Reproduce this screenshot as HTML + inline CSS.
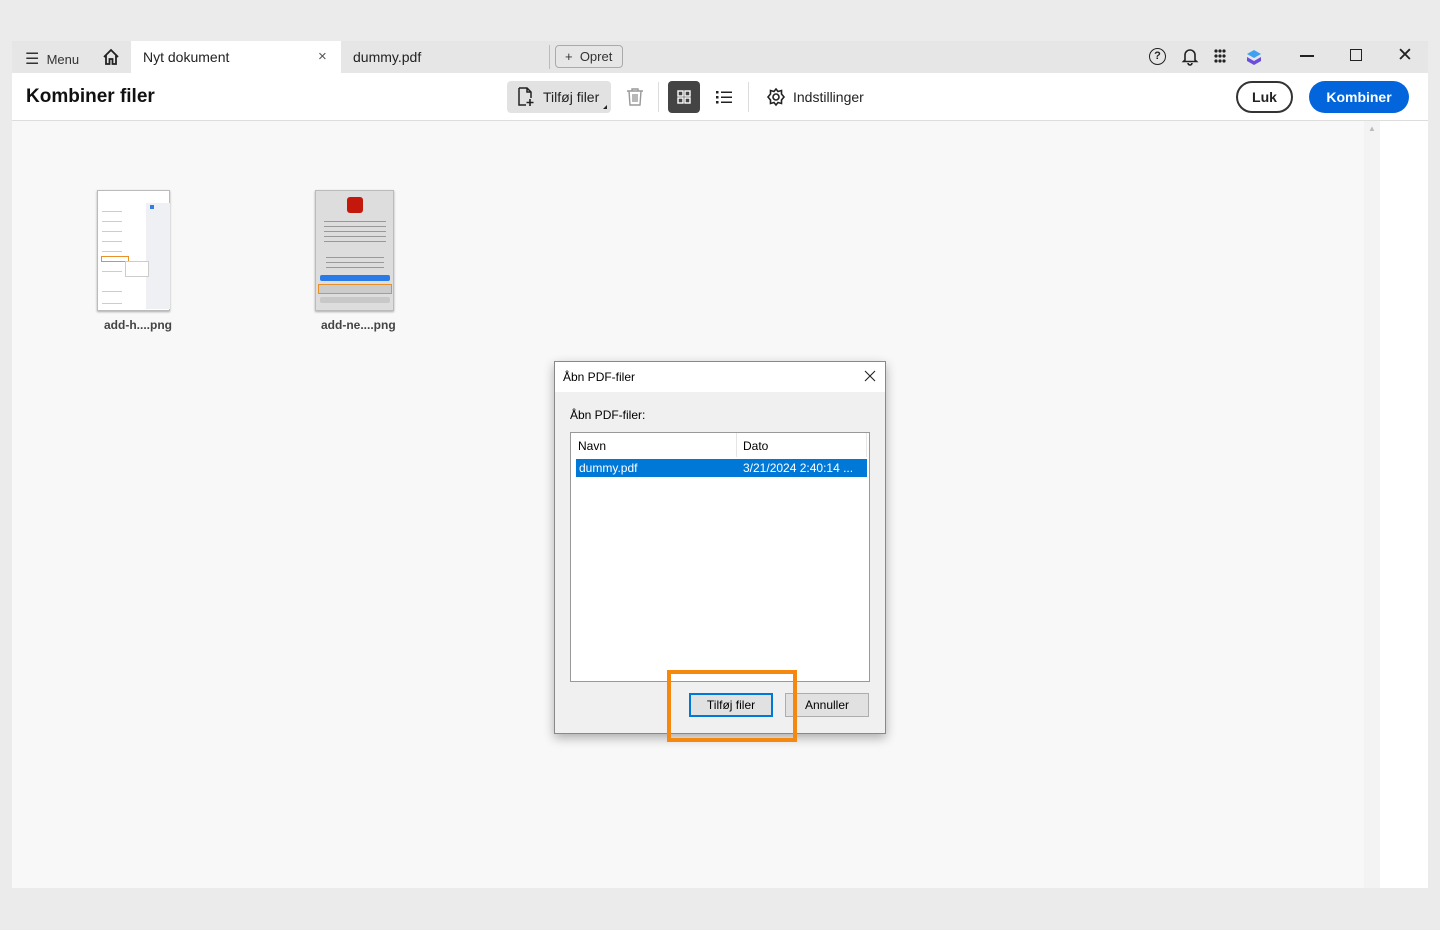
<!DOCTYPE html>
<html><head><meta charset="utf-8"><style>
*{box-sizing:border-box;margin:0;padding:0}
body{width:1440px;height:930px;background:#ebebeb;font-family:"Liberation Sans",sans-serif;position:relative;overflow:hidden;color:#222}
.a{position:absolute}
</style></head><body>
<div class="a" style="left:12px;top:41px;width:1416px;height:32px;background:#e6e6e6"></div>
<div class="a" style="left:25px;top:49px;font-size:13px;color:#333"><span style="font-size:16px;position:relative;top:0px">☰</span>&nbsp; Menu</div>
<svg class="a" style="left:101px;top:47px" width="20" height="20" viewBox="0 0 20 20"><path d="M3 10 L10 3 L17 10 M5 8 V17 H8.5 V12 H11.5 V17 H15 V8" fill="none" stroke="#222" stroke-width="1.8"/></svg>
<div class="a" style="left:131px;top:41px;width:210px;height:32px;background:#fff"></div>
<div class="a" style="left:143px;top:49px;font-size:14px">Nyt dokument</div>
<div class="a" style="left:318px;top:48px;font-size:15px;color:#555">×</div>
<div class="a" style="left:353px;top:49px;font-size:14px">dummy.pdf</div>
<div class="a" style="left:549px;top:45px;width:1px;height:24px;background:#bbb"></div>
<div class="a" style="left:555px;top:45px;width:68px;height:23px;border:1px solid #aaa;border-radius:4px;font-size:13px;padding:3px 0 0 9px;color:#333">+&nbsp; Opret</div>
<div class="a" style="left:1149px;top:48px;width:17px;height:17px;border:1.6px solid #222;border-radius:50%;font-size:11px;font-weight:bold;text-align:center;line-height:14px">?</div>
<svg class="a" style="left:1181px;top:47px" width="18" height="19" viewBox="0 0 18 19"><path d="M4 13 V8 a5 5 0 0 1 10 0 V13 L15.5 14.5 H2.5 Z M7 16 a2 2 0 0 0 4 0" fill="none" stroke="#222" stroke-width="1.6"/></svg>
<svg class="a" style="left:1214px;top:49px" width="16" height="16"><g fill="#222"><circle cx="2" cy="2" r="1.6"/><circle cx="6" cy="2" r="1.6"/><circle cx="10" cy="2" r="1.6"/><circle cx="2" cy="7" r="1.6"/><circle cx="6" cy="7" r="1.6"/><circle cx="10" cy="7" r="1.6"/><circle cx="2" cy="12" r="1.6"/><circle cx="6" cy="12" r="1.6"/><circle cx="10" cy="12" r="1.6"/></g></svg>
<svg class="a" style="left:1246px;top:49px" width="16" height="17"><path d="M8 1 L15 5 L8 9 L1 5Z" fill="#3fa0f0"/><path d="M1 8 L8 12 L15 8 V12 L8 16 L1 12Z" fill="#6a4de0"/></svg>
<div class="a" style="left:1300px;top:55px;width:14px;height:1.5px;background:#222"></div>
<div class="a" style="left:1350px;top:49px;width:12px;height:12px;border:1.4px solid #222"></div>
<div class="a" style="left:1397px;top:44px;font-size:19px;color:#222">✕</div>

<div class="a" style="left:12px;top:73px;width:1416px;height:48px;background:#fff;border-bottom:1px solid #ddd"></div>
<div class="a" style="left:26px;top:86px;font-size:19px;font-weight:bold;color:#111">Kombiner filer</div>
<div class="a" style="left:507px;top:81px;width:104px;height:32px;background:#e2e2e2;border-radius:4px"></div>
<svg class="a" style="left:517px;top:87px" width="18" height="20"><path d="M2 1 H10 L14 5 V11 M14 5 H10 V1 M2 1 V18 H9" fill="none" stroke="#222" stroke-width="1.5"/><path d="M13 12 V19 M9.5 15.5 H16.5" stroke="#222" stroke-width="1.6"/></svg>
<div class="a" style="left:543px;top:89px;font-size:14px">Tilføj filer</div>
<div class="a" style="left:603px;top:105px;width:0;height:0;border-left:4px solid transparent;border-bottom:4px solid #222"></div>
<svg class="a" style="left:626px;top:87px" width="18" height="20"><path d="M1 4 H17 M6 4 V2 H12 V4 M3 4 L4 18 H14 L15 4 M7 7 V15 M9 7 V15 M11 7 V15" fill="none" stroke="#999" stroke-width="1.4"/></svg>
<div class="a" style="left:658px;top:82px;width:1px;height:30px;background:#ddd"></div>
<div class="a" style="left:668px;top:81px;width:32px;height:32px;background:#444;border-radius:4px"></div>
<svg class="a" style="left:677px;top:90px" width="14" height="14"><g fill="none" stroke="#fff" stroke-width="1.4"><rect x="1" y="1" width="5" height="5"/><rect x="8" y="1" width="5" height="5"/><rect x="1" y="8" width="5" height="5"/><rect x="8" y="8" width="5" height="5"/></g></svg>
<svg class="a" style="left:716px;top:90px" width="16" height="14"><g fill="#222"><rect x="0" y="1" width="2.5" height="2.5"/><rect x="0" y="6" width="2.5" height="2.5"/><rect x="0" y="11" width="2.5" height="2.5"/><rect x="5" y="1.5" width="11" height="1.5"/><rect x="5" y="6.5" width="11" height="1.5"/><rect x="5" y="11.5" width="11" height="1.5"/></g></svg>
<div class="a" style="left:748px;top:82px;width:1px;height:30px;background:#ddd"></div>
<svg class="a" style="left:766px;top:87px" width="20" height="20" viewBox="0 0 20 20"><circle cx="10" cy="10" r="3" fill="none" stroke="#222" stroke-width="1.6"/><path d="M10 2 L12 4.5 L15.5 3.5 L15.5 7 L18 10 L15.5 13 L15.5 16.5 L12 15.5 L10 18 L8 15.5 L4.5 16.5 L4.5 13 L2 10 L4.5 7 L4.5 3.5 L8 4.5Z" fill="none" stroke="#222" stroke-width="1.6"/></svg>
<div class="a" style="left:793px;top:89px;font-size:14px">Indstillinger</div>
<div class="a" style="left:1236px;top:81px;width:57px;height:32px;border:2px solid #333;border-radius:16px;font-size:14px;font-weight:bold;text-align:center;line-height:28px">Luk</div>
<div class="a" style="left:1309px;top:81px;width:100px;height:32px;background:#0265dc;border-radius:16px;color:#fff;font-size:14px;font-weight:bold;text-align:center;line-height:32px">Kombiner</div>

<div class="a" style="left:12px;top:121px;width:1352px;height:767px;background:#f8f8f8"></div>
<div class="a" style="left:1364px;top:121px;width:16px;height:767px;background:#f3f3f3"></div>
<div class="a" style="left:1380px;top:121px;width:48px;height:767px;background:#fff"></div>
<div class="a" style="left:1368px;top:124px;font-size:8px;color:#bbb">▲</div>

<div class="a" style="left:97px;top:190px;width:73px;height:121px;background:#fff;border:1px solid #bbb;box-shadow:0 1px 2px #aaa">
 <div class="a" style="left:48px;top:12px;width:24px;height:106px;background:#eef0f4"></div>
 <div class="a" style="left:52px;top:14px;width:4px;height:4px;background:#3a7be0"></div>
 <div class="a" style="left:3px;top:65px;width:28px;height:6px;border:1px solid #e8902a"></div>
 <div class="a" style="left:27px;top:70px;width:24px;height:16px;background:#fff;border:1px solid #ccc"></div>
 <div class="a" style="left:4px;top:20px;width:20px;height:1px;background:#ccc;box-shadow:0 10px #ccc,0 20px #ccc,0 30px #ccc,0 40px #ccc,0 60px #ccc,0 80px #ccc,0 92px #ccc"></div>
</div>
<div class="a" style="left:104px;top:318px;font-size:12px;font-weight:bold;color:#444">add-h....png</div>
<div class="a" style="left:315px;top:190px;width:79px;height:121px;background:#ddd;border:1px solid #bbb;box-shadow:0 1px 2px #aaa">
 <div class="a" style="left:31px;top:6px;width:16px;height:16px;background:#c4180c;border-radius:3px"></div>
 <div class="a" style="left:8px;top:30px;width:62px;height:22px;background:repeating-linear-gradient(#999 0 1px,transparent 1px 5px)"></div>
 <div class="a" style="left:10px;top:66px;width:58px;height:12px;background:repeating-linear-gradient(#999 0 1px,transparent 1px 5px)"></div>
 <div class="a" style="left:4px;top:84px;width:70px;height:6px;background:#2a7be8;border-radius:2px"></div>
 <div class="a" style="left:2px;top:93px;width:74px;height:10px;border:1.5px solid #e8902a;background:#ccc"></div>
 <div class="a" style="left:4px;top:106px;width:70px;height:6px;background:#c8c8c8;border-radius:2px"></div>
</div>
<div class="a" style="left:321px;top:318px;font-size:12px;font-weight:bold;color:#444">add-ne....png</div>

<div class="a" style="left:554px;top:361px;width:332px;height:373px;background:#f0f0f0;border:1px solid #888;box-shadow:0 4px 10px rgba(0,0,0,.3)">
 <div class="a" style="left:0;top:0;width:330px;height:30px;background:#fff"></div>
 <div class="a" style="left:8px;top:8px;font-size:12px;color:#000">Åbn PDF-filer</div>
 <svg class="a" style="left:309px;top:8px" width="12" height="12"><path d="M1 1 L11 11 M11 1 L1 11" stroke="#222" stroke-width="1.1"/></svg>
 <div class="a" style="left:15px;top:46px;font-size:12px;color:#000">Åbn PDF-filer:</div>
 <div class="a" style="left:15px;top:70px;width:300px;height:250px;background:#fff;border:1px solid #999">
  <div class="a" style="left:7px;top:6px;font-size:12px;color:#000">Navn</div>
  <div class="a" style="left:165px;top:0;width:1px;height:24px;background:#e5e5e5"></div>
  <div class="a" style="left:295px;top:0;width:1px;height:24px;background:#e5e5e5"></div>
  <div class="a" style="left:172px;top:6px;font-size:12px;color:#000">Dato</div>
  <div class="a" style="left:5px;top:26px;width:291px;height:18px;background:#0078d7"></div>
  <div class="a" style="left:8px;top:28px;font-size:12px;color:#fff">dummy.pdf</div>
  <div class="a" style="left:172px;top:28px;font-size:12px;color:#fff">3/21/2024 2:40:14 ...</div>
 </div>
 <div class="a" style="left:134px;top:331px;width:84px;height:24px;background:#e1e1e1;border:2px solid #0078d7;font-size:12px;text-align:center;line-height:20px;color:#000">Tilføj filer</div>
 <div class="a" style="left:230px;top:331px;width:84px;height:24px;background:#e1e1e1;border:1px solid #adadad;font-size:12px;text-align:center;line-height:22px;color:#000">Annuller</div>
</div>
<div class="a" style="left:667px;top:670px;width:130px;height:72px;border:4px solid #f5890f"></div>
</body></html>
